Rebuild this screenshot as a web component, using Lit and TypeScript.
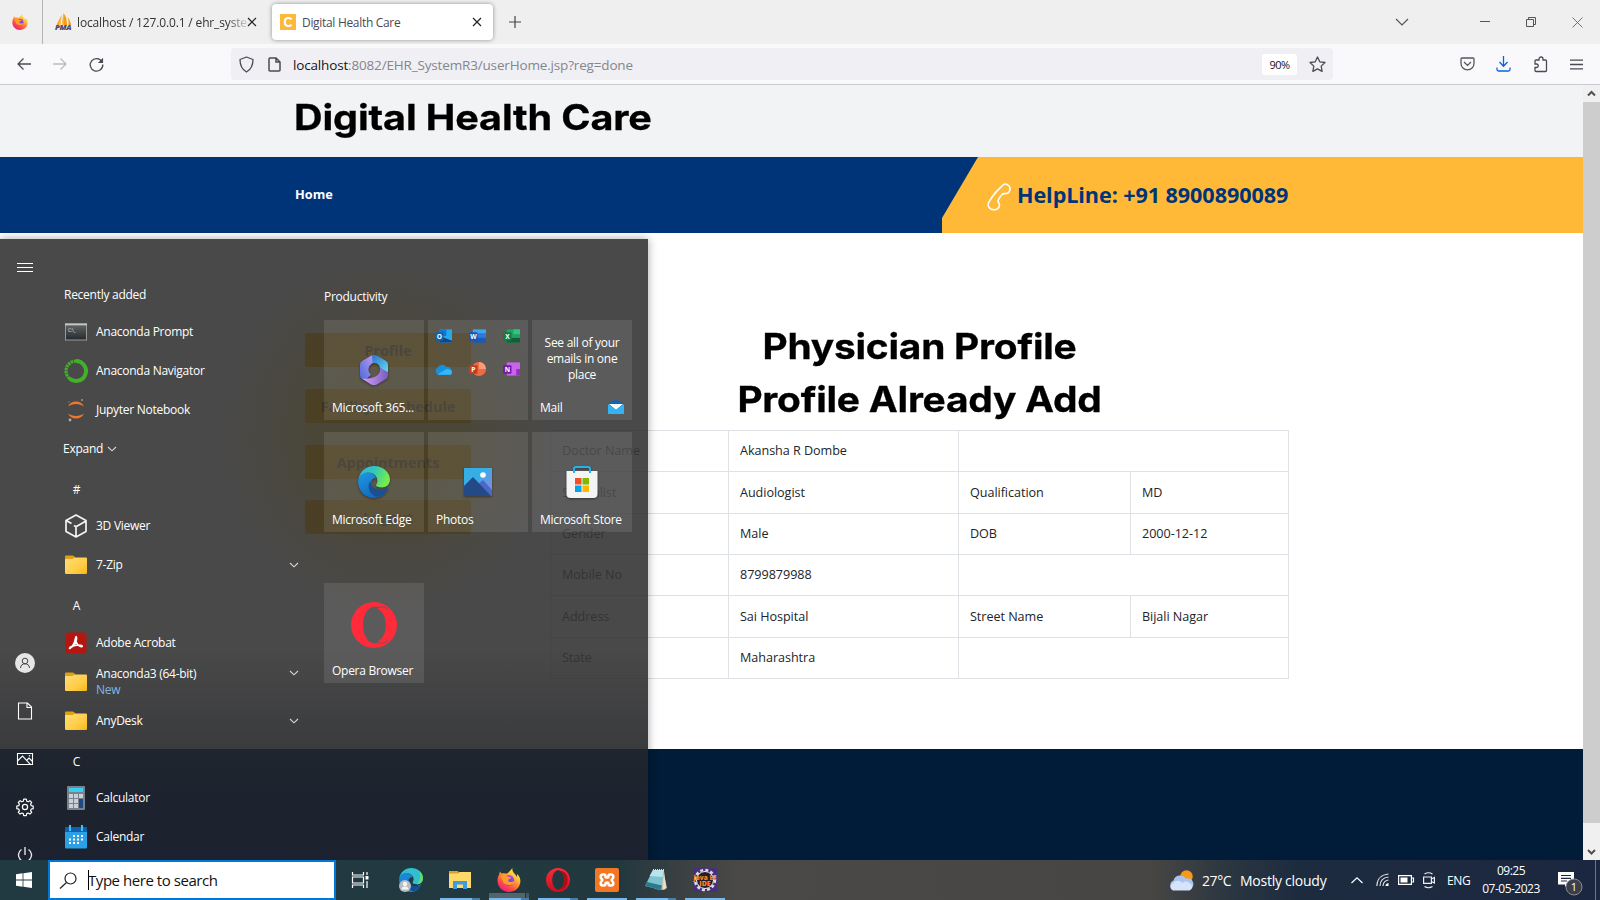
import { LitElement, html, css, svg, nothing } from "lit";
import { customElement } from "lit/decorators.js";

const firefox = html`<svg viewBox="0 0 24 24"><defs>
<linearGradient id="fa" x1=".85" y1=".05" x2=".25" y2="1"><stop offset="0" stop-color="#fff04a"/><stop offset=".3" stop-color="#ffc234"/><stop offset=".55" stop-color="#ff7a36"/><stop offset=".8" stop-color="#fb3a55"/><stop offset="1" stop-color="#ea1c80"/></linearGradient>
<linearGradient id="fb" x1=".7" y1="0" x2=".3" y2="1"><stop offset="0" stop-color="#b04dea"/><stop offset="1" stop-color="#5040c8"/></linearGradient></defs>
<path fill="url(#fa)" d="M15.500 0c-.5 2 .2 3.500 1.700 5.200C18.500 6.600 19.300 7.500 19.800 9c.4-1 .5-2 .3-3.200C23 8.700 24 12 23 15.800 21.700 20.800 17.300 24 12 24 5.500 24 .5 19 .5 12.800c0-2.500.4-4.200 1.700-6.300 0-1 .3-2 1-3 .4 1 .8 1.600 1.500 2C6.500 5 8 5 9.500 5.800 12 4.500 13 2.500 15.500 0z"/>
<circle cx="12" cy="12.300" r="5.200" fill="url(#fb)"/><path fill="#ff9a2e" d="M3.500 8.500c2-2 5.500-1.500 8 .3l2.700.6c-.3 1.400-2.400 1.500-2.900 2.300-.4.800.4 2.300 2.200 2.400 1.600 0 2.600-1 4.200-.5-1 2.500-3.200 3.800-6 3.500C8 16.800 6 15 5.800 12.500z"/></svg>`;
const edge = html`<svg viewBox="0 0 32 32"><defs>
<linearGradient id="ea" x1="0" y1="0" x2="1" y2=".3"><stop offset="0" stop-color="#35b5ea"/><stop offset=".5" stop-color="#31c4c0"/><stop offset="1" stop-color="#74eb4c"/></linearGradient>
<linearGradient id="eb" x1="0" y1="0" x2=".6" y2="1"><stop offset="0" stop-color="#1f98e4"/><stop offset="1" stop-color="#1267b7"/></linearGradient></defs>
<path fill="url(#eb)" d="M.2 14.500C1 9 5 6.500 9.500 6.500c5 0 8.300 3 8.500 6-2.600-.8-5 1.300-4.800 4.800.3 4.800 5 8.700 10 7.700 2.500-.5 4.500-1.800 6-3.300.5-.4 1 0 .7.600C27.300 28.500 22 32 16 32 7 32-.8 24 .2 14.500z"/>
<path fill="#1b4f91" d="M12.600 14.300c-3.800 5-2.300 13.700 6 16.600 5.200-.6 8.800-3.600 11-8.400.3-.6-.2-1-.8-.6-1.900 1.200-3.900 2-6.400 2-6.200 0-11-4.600-9.800-9.600z"/>
<path fill="url(#ea)" d="M.3 13.800C1.500 5.700 8 0 16 0c9.500 0 16 6.500 16 13.500 0 5-3.800 8-8.200 8-3.800 0-5.800-1.300-5.800-2.300 0-.9 1.400-1.500 1.400-4.500C19.400 10 15 6.500 9.700 6.500 5 6.500 1.500 9.500.3 13.800z"/></svg>`;
const opera = (flat: boolean) => html`<svg viewBox="0 0 46 46"><defs><linearGradient id="oa" x1="0" y1="0" x2="0" y2="1"><stop offset="0" stop-color="#ff2a3a"/><stop offset="1" stop-color=${flat ? "#ff2a3a" : "#c8101c"}/></linearGradient></defs>
<path fill="url(#oa)" fill-rule="evenodd" d="M23 0a23 23 0 1 0 0 46a23 23 0 1 0 0-46zM23.500 4.500c6.500 0 11.500 8 11.500 18.500s-5 18.500-11.500 18.500S12 33 12 23 17 4.500 23.500 4.500z"/>
<path fill=${flat ? "#ff2a3a" : "#a5101a"} d="M26 6.500c3-1.700 7-.6 10 2.300 7.500 7.500 7.500 21 0 28.400-3 2.900-7 4-10 2.300 5-2 9-8.500 9-16.500s-4-14.500-9-16.500z"/>
${flat ? svg`<path d="M25.500 6.800C31 2.500 35 6 37.500 7.500" stroke="#5a5a5a" stroke-width=".8" fill="none"/><path d="M25.500 39.200C31 43.500 35 40 37.500 38.500" stroke="#5a5a5a" stroke-width=".8" fill="none"/>` : nothing}</svg>`;
const folder = html`<svg viewBox="0 0 22 20"><defs><linearGradient id="fo" x1="0" y1="0" x2="1" y2="1"><stop offset="0" stop-color="#ffde76"/><stop offset=".6" stop-color="#ffcd49"/><stop offset="1" stop-color="#f5b916"/></linearGradient></defs>
<path fill="#e0a012" d="M0 1.500Q0 .5 1 .5h6.500q1 0 1.600.7L10.500 3v3H0z"/><path fill="url(#fo)" d="M0 5q0-1 1-1h6q1 0 1.800-.8T10.500 2.500H21q1 0 1 1V18q0 1-1 1H1q-1 0-1-1z"/></svg>`;
const chev = html`<svg class="chev" viewBox="0 0 10 6"><path d="M1 1l4 3.800L9 1" fill="none" stroke="#d8d8d8" stroke-width="1.100"/></svg>`;
const x = html`<svg class="x" viewBox="0 0 10 10"><path d="M1 1l8 8M9 1l-8 8" stroke="#222" stroke-width="1.200"/></svg>`;

@customElement("browser-chrome")
class BrowserChrome extends LitElement {
  static styles = css`
    :host { display: block; height: 85px; font-family: "Open Sans", "Noto Sans", sans-serif; color: #333; }
    svg { display: block; overflow: visible; }
    .tabs { height: 44px; background: #efefef; display: flex; align-items: center; }
    .fx { width: 42px; height: 44px; border-right: 1px solid #b5b5b5; box-sizing: content-box; display: flex; align-items: center; padding-left: 0; }
    .fx svg { width: 16px; height: 16px; margin-left: 12px; }
    .tab { display: flex; align-items: center; height: 36px; box-sizing: border-box; font-size: 12px; letter-spacing: -0.31px; }
    .t1 { width: 229px; padding-left: 12px; }
    .t1 .ico { width: 16px; height: 18px; margin-right: 6px; }
    .t1 .lab { width: 170px; overflow: hidden; white-space: nowrap; letter-spacing: -0.15px; -webkit-mask-image: linear-gradient(90deg, #000 88%, rgba(0,0,0,.15) 100%); mask-image: linear-gradient(90deg, #000 88%, rgba(0,0,0,.15) 100%); }
    .x { width: 10px; height: 10px; flex: none; }
    .t2 { width: 221px; background: #fff; border-radius: 4px; box-shadow: 0 0 4px rgba(0,0,0,.4); padding: 0 11px 0 8px; color: #4a4a55; margin-top: -1px; }
    .t2 .ico { width: 16px; height: 16px; margin-right: 6px; }
    .t2 .lab { flex: 1; padding-top: 2px; }
    .plus { width: 12px; height: 12px; margin-left: 16px; }
    .gap { flex: 1; }
    .win { display: flex; align-items: center; gap: 0; }
    .w1 { width: 12px; margin-right: 72px; }
    .w2 { width: 10px; margin-right: 36px; }
    .w3 { width: 10px; margin-right: 36px; }
    .w4 { width: 11px; margin-right: 17px; }
    .bar { height: 40px; background: #f9f9fb; border-bottom: 1px solid #ccccd0; display: flex; align-items: center; }
    .back { width: 14px; margin-left: 17px; }
    .fwd { width: 14px; margin-left: 22px; }
    .rel { width: 15px; margin-left: 22px; }
    .url { margin-left: 127px; width: 1102px; height: 32px; background: #f0f0f4; border-radius: 4px; display: flex; align-items: center; }
    .sh { width: 15px; margin-left: 8px; }
    .pg { width: 13px; margin-left: 14px; }
    .addr { margin-left: 12px; padding-top: 1px; font-size: 13.500px; flex: 1; color: #85858c; white-space: nowrap; letter-spacing: -0.165px; }
    .addr b { color: #15141a; font-weight: 400; }
    .zoom { background: #fff; border-radius: 3px; width: 35px; height: 21px; font-size: 11px; color: #15141a; display: flex; align-items: center; justify-content: center; letter-spacing: -0.5px; }
    .star { width: 17px; margin: 0 7px 0 12px; }
    .ic { width: 15px; }
    .i1 { margin-left: 127px; } .i2 { margin-left: 21px; } .i3 { margin-left: 22px; } .i4 { margin-left: 22px; width: 13px; }
  `;
  render() {
    return html`<div class="tabs">
      <div class="fx">${firefox}</div>
      <div class="tab t1"><svg class="ico" viewBox="0 0 16 18"><path fill="#f89c0e" d="M6.500 2L1.500 12H5.500zM8.500 0L7 12h5C12 7 11 3 8.500 0zM12.500 4c1 2 1.300 5 .8 8H16c-.3-3-1.500-6-3.500-8z"/><path fill="#fbc064" d="M6.500 2L3.500 12h2zM8.500 0L7 12h1.500z"/><text x="0" y="17.300" font-size="6" font-weight="800" font-style="italic" fill="#4a4670" textLength="16" lengthAdjust="spacingAndGlyphs">PMA</text></svg>
        <span class="lab">localhost / 127.0.0.1 / ehr_system</span>${x}</div>
      <div class="tab t2"><svg class="ico" viewBox="0 0 16 16"><path fill="#ffb93a" d="M0 0h16v16H0z"/><path d="M11.500 5.200Q10.300 4 8.400 4Q4.800 4 4.800 8t3.600 4q1.900 0 3.100-1.200" fill="none" stroke="#fff" stroke-width="2.200"/></svg><span class="lab">Digital Health Care</span>${x}</div>
      <svg class="plus" viewBox="0 0 12 12"><path d="M6 0v12M0 6h12" stroke="#444" stroke-width="1.200"/></svg>
      <span class="gap"></span>
      <div class="win">
        <svg class="w1" viewBox="0 0 12 8"><path d="M0 1l6 6 6-6" fill="none" stroke="#555" stroke-width="1.200"/></svg>
        <svg class="w2" viewBox="0 0 10 10"><path d="M0 4.500h10" stroke="#555"/></svg>
        <svg class="w3" viewBox="0 0 10 10"><path d="M.5 2.500h7v7h-7zM2.500 2.500v-2h7v7h-2" fill="none" stroke="#555"/></svg>
        <svg class="w4" viewBox="0 0 11 11"><path d="M.5.5l10 10M10.500.5l-10 10" stroke="#666" stroke-width=".9"/></svg>
      </div></div>
    <div class="bar">
      <svg class="back" viewBox="0 0 14 12"><path d="M14 6H1M6.500.5L1 6l5.500 5.500" fill="none" stroke="#4a4a52" stroke-width="1.300"/></svg>
      <svg class="fwd" viewBox="0 0 14 12"><path d="M0 6h13M7.500.5L13 6l-5.500 5.500" fill="none" stroke="#bcbcc0" stroke-width="1.300"/></svg>
      <svg class="rel" viewBox="0 0 16 16"><path d="M13.800 5A6.700 6.700 0 1 0 14.700 8" fill="none" stroke="#4a4a52" stroke-width="1.400"/><path d="M15 .8v5.700H9.500z" fill="#4a4a52"/></svg>
      <div class="url">
        <svg class="sh" viewBox="0 0 15 17"><path d="M7.500 1L14 3.500C14 9.500 12 13.500 7.500 16 3 13.500 1 9.500 1 3.500z" fill="none" stroke="#4a4a52" stroke-width="1.300" stroke-linejoin="round"/></svg>
        <svg class="pg" viewBox="0 0 13 15"><path d="M2 1h6l4 4v8q0 1-1 1H2q-1 0-1-1V2q0-1 1-1zM8 1v4h4" fill="none" stroke="#4a4a52" stroke-width="1.500"/></svg>
        <span class="addr"><b>localhost</b>:8082/EHR_SystemR3/userHome.jsp?reg=done</span>
        <span class="zoom">90%</span>
        <svg class="star" viewBox="0 0 17 17"><path d="M8.500 1l2.300 4.800 5.200.7-3.800 3.600.9 5.300-4.600-2.500-4.600 2.500.9-5.300L1 6.500l5.200-.7z" fill="none" stroke="#4a4a52" stroke-width="1.300" stroke-linejoin="round"/></svg>
      </div>
      <svg class="ic i1" viewBox="0 0 15 14"><path d="M2 1h11q1 0 1 1v4.500a6.500 6.300 0 0 1-13 0V2q0-1 1-1zM4 5l3.500 3.400L11 5" fill="none" stroke="#55555e" stroke-width="1.300"/></svg>
      <svg class="ic i2" viewBox="0 0 15 16"><path d="M7.500 0v10M3.500 6l4 4.200 4-4.200M1 11.500v2q0 1.500 1.500 1.500h10q1.500 0 1.500-1.500v-2" fill="none" stroke="#0a62e0" stroke-width="1.300"/></svg>
      <svg class="ic i3" viewBox="0 0 15 16"><path d="M2 6V5q0-1 1-1h3V3a2 2 0 0 1 4 0v1h2.500q1 0 1 1v9.500q0 1-1 1H3q-1 0-1-1V11.500h1.500a1.700 1.700 0 0 0 0-3.500H2z" fill="none" stroke="#4a4a52" stroke-width="1.300"/></svg>
      <svg class="ic i4" viewBox="0 0 13 11"><path d="M0 1.200h13M0 5.500h13M0 9.800h13" stroke="#4a4a52" stroke-width="1.300"/></svg>
    </div>`;
  }
}

@customElement("health-page")
class HealthPage extends LitElement {
  static styles = css`
    :host { display: flex; height: 775px; font-family: "Open Sans", sans-serif; overflow: hidden; }
    .doc { width: 1583px; display: flex; flex-direction: column; background: #fff; }
    header, nav, main { flex: none; }
    h1, h2 { margin: 0; font-family: Inter, sans-serif; font-weight: 700; color: #000; white-space: nowrap; -webkit-text-stroke: 0.3px #000; }
    header { height: 72px; background: #f2f3f5; padding-left: 294px; box-sizing: border-box; }
    h1 { font-size: 35px; line-height: 65px; letter-spacing: -0.1px; transform: scaleX(1.13); transform-origin: left; width: fit-content; }
    nav { height: 76px; background: #003478; display: flex; color: #fff; font-weight: 700; }
    .home { width: 647px; padding-left: 295px; font-size: 12.800px; line-height: 75px; }
    .help { flex: 1; background: #ffb937; clip-path: polygon(36px 0, 100% 0, 100% 100%, 0 100%, 0 61px); display: flex; align-items: center; padding-left: 45px; color: #003478; font-size: 21.600px; letter-spacing: -0.080px; line-height: 28px; }
    .help svg { width: 24px; height: 28px; margin: 4px 6px 0 0; }
    .num { padding-bottom: 1px; }
    main { height: 516px; display: flex; }
    .side { width: 166px; margin: 100px 79px 0 305px; display: flex; flex-direction: column; gap: 21.800px; }
    .btn { height: 34px; background: #ffb937; border-radius: 3px; text-align: center; font-weight: 700; font-size: 14.400px; line-height: 35px; color: #404468; white-space: nowrap; }
    .main { width: 739px; padding-top: 87px; }
    h2 { font-size: 35px; line-height: 53px; text-align: center; letter-spacing: -0.2px; transform: scaleX(1.111); }
    .tw { padding-top: 4px; }
    table { border-collapse: collapse; width: 739px; table-layout: fixed; font-size: 12.600px; color: #212529; letter-spacing: -0.040px; }
    td { height: 41.350px; border: 1px solid #dee2e6; padding: 0 0 0.500px 11px; box-sizing: border-box; }
    td:first-child { color: #707070; }
    .c1 { width: 178px; } .c2 { width: 230px; } .c3 { width: 172px; }
    footer { flex: 1; background: #001c38; padding: 92px 0 0 294px; color: #24364a; font-size: 14px; line-height: 20px; }
    .scroll { width: 17px; background: #f0f0f0; display: flex; flex-direction: column; align-items: center; }
    .scroll svg { width: 9px; height: 17px; }
    .thumb { width: 17px; height: 721px; background: #cdcdcd; margin-bottom: 20px; }
  `;
  render() {
    const rows = [["Doctor Name", "Akansha R Dombe"], ["Specialist", "Audiologist", "Qualification", "MD"], ["Gender", "Male", "DOB", "2000-12-12"], ["Mobile No", "8799879988"], ["Address", "Sai Hospital", "Street Name", "Bijali Nagar"], ["State", "Maharashtra"]];
    return html`<div class="doc">
      <header><h1>Digital Health Care</h1></header>
      <nav><div class="home">Home</div><div class="help"><svg viewBox="0 0 24 28"><path d="M15.500 2.500C17 .8 19 .8 20.500 1.700 23 3 23.500 5 22.800 7.200 22 9.600 20 10.800 17.500 10.600 15.500 10.400 15 11 14 12.600 12.500 15 11 16.500 11 18c0 1.200 1.300 2 1.500 4C12.700 24.600 10 27 6.800 26.800 3 26.500.8 24 1.200 21 1.500 18.500 3.500 17 5.500 13.500 8 9.500 12.500 5.500 15.500 2.500z" fill="none" stroke="#fff" stroke-width="1.600"/></svg><span class="num">HelpLine: +91 8900890089</span></div></nav>
      <main><div class="side">${["Profile", "Facility & Schedule", "Appointments", "Logout"].map((b) => html`<div class="btn">${b}</div>`)}</div>
        <div class="main"><h2>Physician Profile</h2><h2>Profile Already Add</h2>
          <div class="tw"><table><colgroup><col class="c1" /><col class="c2" /><col class="c3" /><col /></colgroup>
          ${rows.map((r) => html`<tr>${r.map((c) => html`<td>${c}</td>`)}${r.length === 2 ? html`<td colspan="2"></td>` : nothing}</tr>`)}</table></div></div></main>
      <footer>Digital Health Care</footer></div>
      <div class="scroll"><svg viewBox="0 0 9 17"><path d="M1 10.500L4.500 7 8 10.500" fill="none" stroke="#505050" stroke-width="2"/></svg><div class="thumb"></div><svg viewBox="0 0 9 17"><path d="M1 7l3.500 3.500L8 7" fill="none" stroke="#505050" stroke-width="2"/></svg></div>`;
  }
}

const office = (letter: string, dark: string, body: unknown) => html`<svg viewBox="0 0 18 16">${body}<rect y="4" width="9" height="9" rx="1" fill=${dark}/><text x="4.500" y="11" font-size="7" font-weight="700" fill="#fff" text-anchor="middle">${letter}</text></svg>`;

@customElement("start-menu")
class StartMenu extends LitElement {
  static styles = css`
    :host { display: grid; grid-template-columns: 50px 268px 1fr; width: 648px; height: 621px; overflow: hidden; color: #fff; font-family: "Open Sans", "Noto Sans", sans-serif; font-size: 12px; letter-spacing: -0.27px;
      background: radial-gradient(ellipse 165px 175px at 388px 196px, rgba(80,66,10,.28) 40%, transparent 100%), linear-gradient(180deg, transparent 410px, rgba(36,38,44,.4) 510px, rgba(27,36,50,.5) 510px, rgba(26,32,47,.85) 621px), rgba(41,41,41,.85); box-shadow: 0 0 9px rgba(0,0,0,.35); }
    svg { display: block; overflow: visible; }
    .rail { position: relative; display: flex; flex-direction: column; align-items: center; padding-top: 23px; }
    .rail svg { width: 20px; height: 20px; margin-bottom: 28px; flex: none; }
    .rail .ham { width: 16px; height: 11px; margin-bottom: 380px; }
    .list { padding-top: 35px; }
    .row { height: 38.850px; display: flex; align-items: center; }
    .pic { width: 24px; height: 24px; margin: 0 8px 0 14px; display: flex; align-items: center; justify-content: center; }
    .pic svg { width: 24px; height: 24px; }
    .pic .fold, .fold svg { width: 22px; height: 20px; }
    .row .txt { flex: 1; line-height: 16px; white-space: nowrap; }
    .new { color: #7fb5e6; }
    .chev { width: 10px; height: 6px; }
    .row > .chev { margin: 0 19px 0 0; }
    .row > .high { margin-bottom: 18px; }
    .head, .alpha { padding-top: 3px; box-sizing: border-box; }
    .head { padding-left: 14px; }
    .alpha { padding-left: 20px; width: 33px; justify-content: center; }
    .exp { display: flex; align-items: center; gap: 4px; padding-left: 13px; }
    .exp > .chev { margin: 0; }
    .tiles { padding: 49px 0 0 6px; }
    .group { line-height: 18px; height: 32px; }
    .grid { display: grid; grid-template-columns: repeat(3, 100px); grid-auto-rows: 100px; gap: 12px 4px; }
    .opera { margin-top: 51px; }
    .tile { background: rgba(255,255,255,.1); display: flex; flex-direction: column; align-items: center; justify-content: flex-end; box-sizing: border-box; padding-bottom: 4px; }
    .tile .lab { align-self: stretch; padding-left: 8px; line-height: 16px; white-space: nowrap; }
    .tile .logo { width: 32px; height: 32px; margin-bottom: 14px; filter: drop-shadow(0 1px 1px rgba(0,0,0,.4)); }
    .tile .big { width: 46px; height: 46px; margin-bottom: 15px; }
    .big svg { width: 46px; height: 46px; }
    .apps { display: grid; grid-template-columns: repeat(3, 17px); gap: 17px 17px; justify-content: center; align-content: start; padding: 8px 2px 0 0; }
    .apps svg { width: 17px; height: 16px; }
    .mail { justify-content: space-between; padding-top: 15px; }
    .msg { text-align: center; line-height: 16px; white-space: nowrap; }
    .mrow { display: flex; align-self: stretch; align-items: center; justify-content: space-between; padding-right: 8px; }
    .mrow svg { width: 16px; height: 15px; margin-top: -3px; }
  `;
  row(icon: unknown, label: unknown, more = false, up = false) {
    return html`<div class="row"><span class="pic">${icon}</span><span class="txt">${label}</span>${more ? html`<svg class=${up ? "chev high" : "chev"} viewBox="0 0 10 6"><path d="M1 1l4 3.800L9 1" fill="none" stroke="#d8d8d8" stroke-width="1.100"/></svg>` : nothing}</div>`;
  }
  render() {
    const fold = html`<span class="fold">${folder}</span>`;
    return html`<div class="rail">
      <svg class="ham" viewBox="0 0 16 11"><path d="M0 1.500h16M0 5.500h16M0 9.500h16" stroke="#fff"/></svg>
      <svg viewBox="0 0 20 20"><circle cx="10" cy="10" r="10" fill="#e6e6e6"/><circle cx="10" cy="8" r="2.800" fill="none" stroke="#444"/><path d="M5.500 15c.3-3 2-4.200 4.500-4.200s4.200 1.200 4.500 4.200" fill="none" stroke="#444"/></svg>
      <svg viewBox="0 0 20 20"><path d="M3.500 2h9l4 4v12h-13zM12 2v4.500h4.500" fill="none" stroke="#fff" stroke-width="1.100"/></svg>
      <svg viewBox="0 0 20 20"><path d="M2.500 4.500h15v11h-15zM2.500 12l5-5 8 8.500M12 11l2-2 3.500 3.500" fill="none" stroke="#fff" stroke-width="1.100"/><circle cx="14.500" cy="6.800" r=".8" fill="#fff"/></svg>
      <svg viewBox="0 0 20 20"><circle cx="10" cy="10" r="2.600" fill="none" stroke="#fff" stroke-width="1.200"/><path fill="none" stroke="#fff" stroke-width="1.200" stroke-linejoin="round" d="M8.700 2.200h2.600l.4 2 1.500.6 1.700-1.100 1.800 1.800-1.100 1.700.6 1.500 2 .4v2.600l-2 .4-.6 1.500 1.100 1.700-1.800 1.800-1.700-1.100-1.500.6-.4 2H8.700l-.4-2-1.500-.6-1.700 1.100-1.800-1.800 1.100-1.700-.6-1.500-2-.4V9.100l2-.4.6-1.500-1.100-1.700 1.800-1.800 1.700 1.100 1.500-.6z"/></svg>
      <svg viewBox="0 0 20 20"><path d="M10 2v8M6.500 4.500a6.500 6.500 0 1 0 7 0" fill="none" stroke="#e4e4e4" stroke-width="1.400"/></svg>
    </div>
    <div class="list">
      <div class="row head">Recently added</div>
      ${this.row(html`<svg viewBox="0 0 24 24"><defs><linearGradient id="cm" x1="0" y1="0" x2="0" y2="1"><stop offset="0" stop-color="#666"/><stop offset="1" stop-color="#222a30"/></linearGradient></defs><rect x="1.500" y="4" width="21" height="16" fill="url(#cm)" stroke="#9a9a9a"/><path d="M1 3.500h22v1.800H1z" fill="#c8c8c8"/><text x="4" y="12" font-size="5" fill="#ddd">C:\\_</text></svg>`, "Anaconda Prompt")}
      ${this.row(html`<svg viewBox="0 0 24 24"><path d="M12 2a10 10 0 1 1-6.500 17.600" fill="none" stroke="#43b02a" stroke-width="4"/><path d="M5.500 19.600A10 10 0 0 1 12 2" fill="none" stroke="#43b02a" stroke-width="3.200" stroke-dasharray="2.400 .7"/></svg>`, "Anaconda Navigator")}
      ${this.row(html`<svg viewBox="0 0 24 24"><path fill="#f37726" d="M4 8.500C5.500 5 8.500 3.500 12 3.500s6.500 1.500 8 5C18 6.900 15 6 12 6S6 6.900 4 8.500zM4 15.500c1.500 3.500 4.500 5 8 5s6.500-1.500 8-5c-2 1.600-5 2.500-8 2.500s-6-.9-8-2.500z"/><circle cx="18" cy="2" r="1" fill="#9a9a9a"/><circle cx="6" cy="22" r="1.400" fill="#b0b0b0"/><circle cx="5" cy="4" r=".7" fill="#888"/></svg>`, "Jupyter Notebook")}
      <div class="row exp">Expand ${chev}</div>
      <div class="row alpha">#</div>
      ${this.row(html`<svg viewBox="0 0 24 24"><path d="M12 1L22 6.500v11L12 23 2 17.500v-11zM3 7l4.500 2.500M10 11.500l2 1.200V22M12 12.700L22 7" fill="none" stroke="#f4f4f4" stroke-width="1.700" stroke-linejoin="round"/></svg>`, "3D Viewer")}
      ${this.row(fold, "7-Zip", true)}
      <div class="row alpha">A</div>
      ${this.row(html`<svg viewBox="0 0 24 24"><rect x="1.500" y="1.500" width="21" height="21" rx="3.500" fill="#b5160f"/><path d="M6 17c2.500-1.500 4.500-5 5.200-8.500.4-2.500.6-3 .9-3s.9 1.500.3 3.600C11.900 12 9 15.500 6 17.300c-1 .7-.8-1 1.500-1.800 3-1.200 7.500-2 10-1 1.500.6.500 1.600-.7 1.100-2.300-.8-4.200-3.100-5-5.600" fill="none" stroke="#fff" stroke-width="1.500"/></svg>`, "Adobe Acrobat")}
      ${this.row(fold, html`Anaconda3 (64-bit)<br /><span class="new">New</span>`, true, true)}
      ${this.row(fold, "AnyDesk", true)}
      <div class="row alpha">C</div>
      ${this.row(html`<svg viewBox="0 0 24 24"><rect x="3" width="18" height="24" rx="1" fill="#77828c"/><path fill="#38d0f0" d="M5 2h14v4H5z"/><path fill="#c9d0d6" d="M5 8h4v4H5zM10 8h4v4h-4zM15 8h4v4h-4zM5 13h4v4H5zM10 13h4v4h-4zM5 18h4v4H5zM10 18h4v4h-4z"/><path fill="#1b4a86" d="M15 13h4v9h-4z"/></svg>`, "Calculator")}
      ${this.row(html`<svg viewBox="0 0 24 24"><path fill="#2aa0e6" d="M1 4h22v18.500q0 1-1 1H2q-1 0-1-1z"/><path fill="#1060b4" d="M2 2h20q1 0 1 1v4H1V3q0-1 1-1z"/><path fill="#3cc8ee" d="M5 0h2v6H5zM17 0h2v6h-2z"/><path d="M9 11h10M5 14.500h14M5 18h10" stroke="#fff" stroke-width="2" stroke-dasharray="2"/></svg>`, "Calendar")}
    </div>
    <div class="tiles"><div class="group">Productivity</div>
      <div class="grid">
        <div class="tile"><svg class="logo" viewBox="0 0 32 32"><defs><linearGradient id="ma" x1="0" y1="0" x2="1" y2="1"><stop offset="0" stop-color="#2f66c8"/><stop offset="1" stop-color="#5fe0f4"/></linearGradient><linearGradient id="mb" x1="1" y1="0" x2="0" y2="1"><stop offset="0" stop-color="#b89af5"/><stop offset="1" stop-color="#4a6ad8"/></linearGradient><linearGradient id="mc" x1="0" y1="0" x2="1" y2="0"><stop offset="0" stop-color="#d8a0fa"/><stop offset="1" stop-color="#7a5cc0"/></linearGradient></defs><path fill="url(#ma)" d="M13 1.500Q16 0 19 1.500L28 7q2 1.200 2 3.500V19l-8-5q-1-5-6-5-3 0-5 2z"/><path fill="url(#mb)" d="M14 1.200L4 7Q2 8.300 2 10.500v11q0 2.200 2 3.400l3 1.500 6-6q-3-2-2.500-6 .5-3 4-5.500z"/><path fill="url(#mc)" d="M4 24.500L13 30.500q3 1.500 6 0L28 25q2-1.200 2-3.500V18l-8-4q.5 6-4.500 8.500Q11 25.500 4 24.500z"/></svg><span class="lab">Microsoft 365...</span></div>
        <div class="tile apps">
          ${office("O", "#0a63b5", svg`<path fill="#28a8ea" d="M5 1h13v14H5z"/><path fill="#0f78d4" d="M5 1h7v7H5z"/><path fill="#14447d" d="M5 8l13 5v2H5z"/>`)}
          ${office("W", "#1a53b5", svg`<path fill="#41a5ee" d="M4 1h14v5H4z"/><path fill="#2b7cd3" d="M4 5h14v5H4z"/><path fill="#185abd" d="M4 10h14v5H4z"/>`)}
          ${office("X", "#107c41", svg`<path fill="#21a366" d="M4 1h14v14H4z"/><path fill="#33c481" d="M11 1h7v5h-7z"/><path fill="#185c37" d="M4 10h14v5H4z"/>`)}
          <svg viewBox="0 0 18 16"><path fill="#1490df" d="M4 14a4 4 0 0 1-1-7.500A5 5 0 0 1 12 6a4 4 0 0 1 2.500 8z"/><path fill="#33b8f4" d="M3 13.500L12 8q6 0 6 3.500T14.500 14H4z"/></svg>
          ${office("P", "#c43e1c", svg`<circle cx="10.500" cy="8" r="7.500" fill="#ed6c47"/><path fill="#ff9a78" d="M10.500.5A7.500 7.500 0 0 1 18 8h-7.500z"/>`)}
          ${office("N", "#7719aa", svg`<path fill="#ca64ea" d="M4 1h14v14H4z"/><path fill="#9332bf" d="M14 8h4v7h-4z"/>`)}
        </div>
        <div class="tile mail"><div class="msg">See all of your<br />emails in one<br />place</div><div class="mrow"><span class="lab">Mail</span><svg viewBox="0 0 16 15"><path fill="#1464b0" d="M0 5l8-5 8 5v3H0z"/><path fill="#fff" d="M1 5h14l-7 6z"/><path fill="#32b4f2" d="M0 5l8 5.500L16 5v10H0z"/></svg></div></div>
        <div class="tile"><span class="logo">${edge}</span><span class="lab">Microsoft Edge</span></div>
        <div class="tile"><svg class="logo" viewBox="0 0 32 32"><defs><linearGradient id="ph" x1="0" y1="0" x2="1" y2="1"><stop offset=".4" stop-color="#35aee6"/><stop offset="1" stop-color="#a07de0"/></linearGradient></defs><path fill="url(#ph)" d="M2 2h28v28H2z"/><path fill="#4a68c8" d="M14 20l7-6 9 10v6H14z"/><path fill="#234a86" d="M2 20l9-9 18 19H2z"/><circle cx="21" cy="9" r="2.800" fill="#fff"/></svg><span class="lab">Photos</span></div>
        <div class="tile"><svg class="logo" viewBox="0 0 32 32"><path fill="#f4f4f4" d="M.5 5h31v23q0 4-4 4h-23q-4 0-4-4z"/><path d="M8 7V3q0-2 2-2h12q2 0 2 2v4" fill="none" stroke="#28b0ee" stroke-width="2"/><path fill="#f25022" d="M9 12h6.500v6.500H9z"/><path fill="#7fba00" d="M16.500 12H23v6.500h-6.500z"/><path fill="#00a4ef" d="M9 19.500h6.500V26H9z"/><path fill="#ffb900" d="M16.500 19.500H23V26h-6.500z"/></svg><span class="lab">Microsoft Store</span></div>
      </div>
      <div class="grid opera"><div class="tile"><span class="big">${opera(true)}</span><span class="lab">Opera Browser</span></div></div>
    </div>`;
  }
}

@customElement("task-bar")
class TaskBar extends LitElement {
  static styles = css`
    :host { display: flex; height: 40px; color: #fff; font-family: "Open Sans", "Noto Sans", sans-serif; background: linear-gradient(90deg, #213a42 0, #22383f 620px, #3a4042 680px, #4a4947 740px, #484644 1150px, #2a3640 1230px, #1d2b3f 1300px, #1b2740 1600px); }
    svg { display: block; overflow: visible; }
    .start { width: 48px; display: flex; align-items: center; justify-content: center; }
    .start svg { width: 16px; height: 16px; }
    .search { width: 288px; box-sizing: border-box; border: 2px solid #0078d7; background: #fff; color: #111; display: flex; align-items: center; font-size: 15px; letter-spacing: -0.45px; }
    .search svg { width: 17px; height: 17px; margin: 0 11px 0 10px; }
    .caret { width: 1px; height: 20px; background: #000; margin-right: -1px; }
    .app { width: 49px; display: flex; flex-direction: column; align-items: center; justify-content: flex-end; }
    .pic { width: 24px; height: 24px; position: relative; margin-bottom: 2px; }
    .pic svg { width: 24px; height: 24px; }
    .line { width: 40px; height: 2px; background: #76b9ed; margin-top: 4px; }
    .multi { background: linear-gradient(90deg, #76b9ed 32px, #4a80a8 32px); }
    .on { background: linear-gradient(90deg, rgba(255,255,255,.22) 36px, transparent 36px, transparent 37px, rgba(255,255,255,.16) 37px); height: 5px; width: 40px; margin-top: -1px; }
    .on + .line { margin-top: 0; }
    .none { background: none; }
    .view { width: 43px; padding-right: 1px; margin-right: 3px; display: flex; align-items: center; justify-content: center; padding-left: 3px; }
    .view svg { width: 17px; height: 16px; }
    .gap { flex: 1; }
    .tray { display: flex; align-items: center; }
    .wx { width: 25px; height: 21px; }
    .temp { font-size: 14px; margin-left: 8px; letter-spacing: -0.400px; width: 38px; }
    .sky { font-size: 14px; letter-spacing: -0.25px; width: 111px; white-space: nowrap; }
    .up { width: 12px; height: 7px; margin-right: 13px; }
    .wifi { width: 13px; height: 14px; margin-right: 9px; }
    .bat { width: 16px; height: 10px; margin-right: 9px; }
    .cam { width: 12px; height: 16px; margin-right: 12px; }
    .eng { font-size: 12px; width: 34px; letter-spacing: -0.4px; }
    .clock { width: 60px; text-align: center; font-size: 12px; line-height: 18px; letter-spacing: -0.5px; white-space: nowrap; }
    .note { width: 25px; height: 24px; margin: 0 12px 0 17px; }
    .end { width: 4px; height: 40px; border-left: 1px solid #6c7686; }
  `;
  app(icon: unknown, line: string, on = false) {
    return html`<div class="app"><span class="pic">${icon}</span>${on ? html`<div class="on"></div>` : nothing}<div class="line ${line}"></div></div>`;
  }
  render() {
    return html`<div class="start"><svg viewBox="0 0 16 16"><path fill="#fff" d="M0 2.300L6.600 1.300V7.600H0zM7.400 1.200L16 0V7.600H7.400zM0 8.400H6.600V14.700L0 13.700zM7.400 8.400H16V16L7.400 14.800z"/></svg></div>
    <div class="search"><svg viewBox="0 0 17 17"><circle cx="10.500" cy="6.500" r="5.500" fill="none" stroke="#222" stroke-width="1.200"/><path d="M6.500 10.500L0 16.500" stroke="#222" stroke-width="1.200"/></svg><span class="caret"></span>Type here to search</div>
    <div class="view"><svg viewBox="0 0 17 16"><path d="M.5 0v3h11V0M.5 16v-3h11v3M.5 5h11v6H.5z" fill="none" stroke="#fff" stroke-width="1.200"/><path d="M15 0v3M15 9v7" stroke="#fff" stroke-width="1.200"/><path fill="#fff" d="M13.500 4h3v3.500h-3z"/></svg></div>
    ${this.app(html`<svg viewBox="0 0 24 24"><g transform="scale(.75)">${svg`<path fill="#1a86d8" d="M.2 14.500C1 9 5 6.500 9.500 6.500c5 0 8.300 3 8.500 6-2.600-.8-5 1.300-4.800 4.800.3 4.800 5 8.700 10 7.700l6-3.300C27.300 28.500 22 32 16 32 7 32-.8 24 .2 14.500z"/><path fill="#134f92" d="M12.600 14.300c-3.800 5-2.300 13.700 6 16.600 5.200-.6 8.800-3.600 11-8.400-9 4-17 .5-17-8.200z"/><path fill="#31bfd0" d="M.3 13.800C1.500 5.700 8 0 16 0c9.500 0 16 6.500 16 13.500 0 5-3.800 8-8.200 8-3.800 0-5.800-1.300-5.800-2.300 0-.9 1.400-1.500 1.400-4.500C19.400 10 15 6.500 9.700 6.500 5 6.500 1.500 9.500.3 13.800z"/><path fill="#5fdc70" d="M27 4c5 4 6.500 11 3.500 14.500-2 2.500-5 3-6.700 3 5-5 5-12 3.200-17.500z"/>`}</g><circle cx="6" cy="18" r="6" fill="#b8bcc0"/><circle cx="6" cy="16" r="2.200" fill="#f4f4f4"/><path fill="#f4f4f4" d="M2.500 21.500q0-3 3.500-3t3.500 3z"/></svg>`, "none")}
    ${this.app(html`<svg viewBox="0 0 24 24"><path fill="#e0a21a" d="M1 3h9l1 2v3H1z"/><path fill="#ffd96a" d="M1 5.500h9l1.500-1.500H23V20H1z"/><path fill="#3f9be0" d="M5 13h14v8h-4v-4.500H9V21H5z"/></svg>`, "multi")}
    ${this.app(firefox, "multi", true)}
    ${this.app(opera(false), "multi")}
    ${this.app(html`<svg viewBox="0 0 24 24"><rect width="24" height="24" rx="2" fill="#f37623"/><path d="M8 6.500h1q1.500 0 1.500 1.700Q10.500 9.500 12 9.500t1.500-1.300q0-1.700 1.500-1.700h1q2.300 0 2.300 2.200 0 1.500-1.100 2.300-1.200 1 0 2 1.100.8 1.100 2.300 0 2.200-2.300 2.200h-1q-1.500 0-1.500-1.700 0-1.300-1.500-1.300t-1.500 1.300q0 1.700-1.500 1.700H8q-2.300 0-2.300-2.200 0-1.500 1.100-2.300 1.200-1 0-2-1.100-.8-1.100-2.300Q5.700 6.500 8 6.500z" fill="none" stroke="#fff" stroke-width="2.600"/></svg>`, "")}
    ${this.app(html`<svg viewBox="0 0 24 24"><path fill="#c9c2ae" d="M19 2l4 18-3 2-9-1z"/><path fill="#e9e2cc" d="M20 3l2 17-3 1z"/><path fill="#7cc4d0" d="M9 2h11l-3 20L1 18z"/><path fill="#b8e4ea" d="M9 2h11l-1.500 7L5.500 8z"/><path d="M9 2h11" stroke="#ddd" stroke-width="2" stroke-dasharray="1"/><path fill="#2c7a90" d="M3 14l15 3.500-1 4.500L1 18z"/></svg>`, "multi")}
    ${this.app(html`<svg viewBox="0 0 24 24"><rect width="24" height="24" rx="1" fill="#46307c"/><circle cx="12" cy="12" r="10" fill="none" stroke="#ddd" stroke-width="2.400" stroke-dasharray="3 2.240"/><circle cx="12" cy="12" r="8.500" fill="#2a1c28" stroke="#eee"/><text x="12" y="11.500" font-size="6.500" font-weight="800" fill="#ff8420" text-anchor="middle" textLength="23" lengthAdjust="spacingAndGlyphs">Java EE</text><text x="12" y="18" font-size="7" font-weight="800" fill="#ff8420" text-anchor="middle">IDE</text></svg>`, "")}
    <span class="gap"></span>
    <div class="tray">
      <svg class="wx" viewBox="0 0 25 21"><circle cx="17.500" cy="6.500" r="6.200" fill="#f59a1b"/><path fill="#a9c4ee" d="M5 20a5 5 0 0 1-.5-9.500A7 7 0 0 1 17 8.500 5.500 5.500 0 0 1 20 20z"/><path fill="#d5e3fb" d="M4 20.500a4 4 0 0 1 0-7.500 6 6 0 0 1 9.500 0 5 5 0 0 1 7 0 4 4 0 0 1 0 7.500z"/></svg>
      <span class="temp">27°C</span><span class="sky">Mostly cloudy</span>
      <svg class="up" viewBox="0 0 12 7"><path d="M.5 6L6 .8 11.500 6" fill="none" stroke="#fff" stroke-width="1.200"/></svg>
      <svg class="wifi" viewBox="0 0 13 14"><path d="M.8 13C1 6 5.500 1.500 12.500 1M4 13c.2-5 3-8.500 8.500-9M7 13c.2-3 2-5.500 5.500-6" fill="none" stroke="#ddd" stroke-width="1.200"/><path d="M9.500 13q0-2.500 3-3v3z" fill="#fff"/></svg>
      <svg class="bat" viewBox="0 0 16 10"><path d="M.6.600h12.800v8.800H.6zM14 3h1.500v4H14" fill="none" stroke="#fff" stroke-width="1.200"/><path fill="#fff" d="M2.500 2.500h7v5h-7z"/></svg>
      <svg class="cam" viewBox="0 0 12 16"><path d="M.6 5h7.800v6.400H.6zM8.400 7l3-1.500v5.500l-3-1.500M1.500 2q4-2.500 8 0M1.500 14.500q4 2.500 8 0" fill="none" stroke="#eee" stroke-width="1.200"/></svg>
      <span class="eng">ENG</span>
      <div class="clock">09:25<br />07-05-2023</div>
      <svg class="note" viewBox="0 0 25 24"><path fill="#fff" d="M0 4h16v12.500H9L7 19v-2.500H0z"/><path d="M3 7.500h10M3 10.300h10M3 13h6" stroke="#1c2840" stroke-width="1.200"/><circle cx="16" cy="19" r="8" fill="#3a3f49" stroke="#8c8c8c"/><text x="16" y="23" font-size="11" fill="#fff" text-anchor="middle">1</text></svg>
      <div class="end"></div></div>`;
  }
}

@customElement("app-root")
class AppRoot extends LitElement {
  static styles = css`
    :host { display: block; position: relative; width: 1600px; height: 900px; overflow: hidden; }
    .layer { position: absolute; left: 0; top: 239px; height: 621px; width: 660px; clip-path: inset(-15px -15px 0 0); }
  `;
  render() {
    return html`<browser-chrome></browser-chrome><health-page></health-page><div class="layer"><start-menu></start-menu></div><task-bar></task-bar>`;
  }
}
